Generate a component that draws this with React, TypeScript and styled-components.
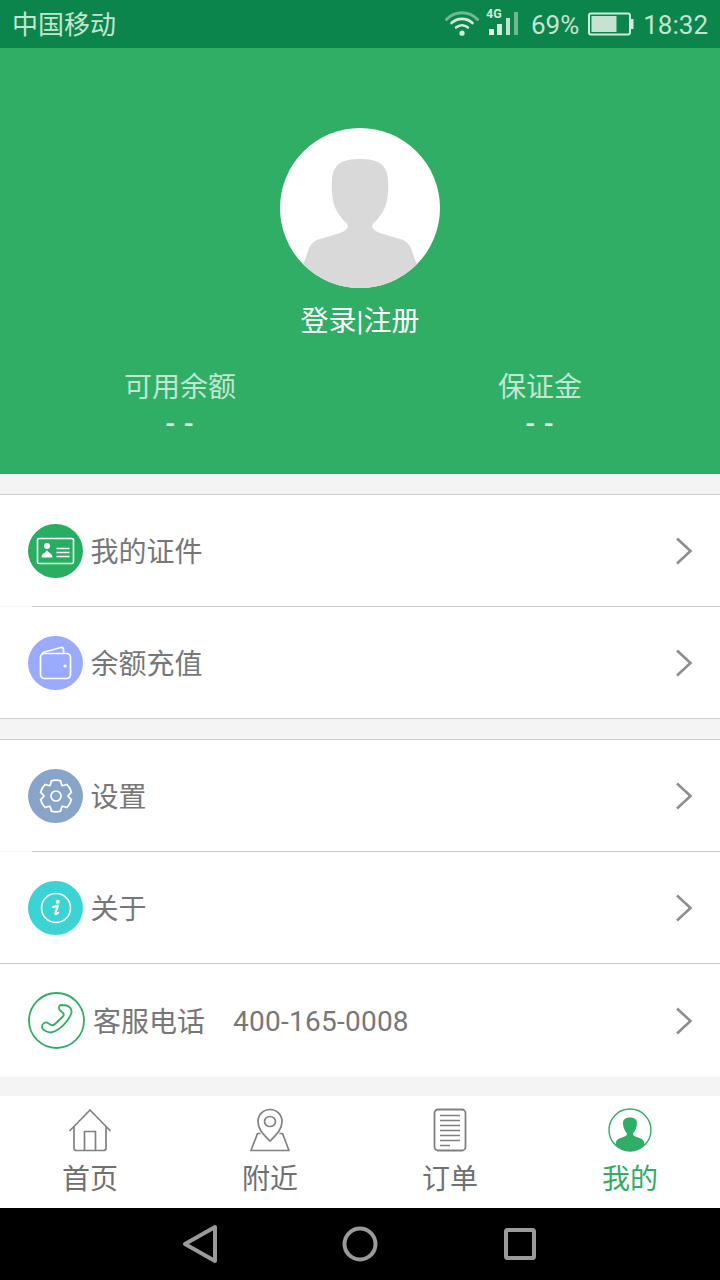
import styled, { createGlobalStyle } from "styled-components";

const FONT = `Roboto, "Noto Sans CJK SC", sans-serif`;

const GlobalStyle = createGlobalStyle`
  html, body {
    margin: 0;
    padding: 0;
    background: #f4f4f4;
  }
  * {
    box-sizing: border-box;
  }
`;

const Page = styled.div`
  width: 720px;
  height: 1280px;
  display: flex;
  flex-direction: column;
  overflow: hidden;
  background: #f4f4f4;
  font-family: ${FONT};
`;

const StatusBar = styled.div`
  height: 48px;
  padding: 0 12px;
  display: flex;
  align-items: center;
  background: #0b854b;
  color: #c4e3d1;
  font-size: 26px;
`;

const Carrier = styled.span`
  flex: 1;
  margin-bottom: 4px;
`;

const StatusIcons = styled.div`
  display: flex;
  align-items: center;
`;

const BatteryText = styled.span`
  margin: 2px 9px 0 13px;
`;

const Clock = styled.span`
  margin: 2px 0 0 9px;
`;

const Header = styled.div`
  height: 426px;
  padding-top: 80px;
  display: flex;
  flex-direction: column;
  align-items: center;
  background: #30ae66;
`;

const Avatar = styled.div`
  width: 160px;
  height: 160px;
  border-radius: 50%;
  overflow: hidden;
  background: #fff;
`;

const LoginText = styled.div`
  margin-top: 17px;
  color: #fff;
  font-size: 28px;
  line-height: 34px;
`;

const Balances = styled.div`
  width: 100%;
  margin-top: 32px;
  display: grid;
  grid-template-columns: 1fr 1fr;
`;

const Balance = styled.div`
  display: flex;
  flex-direction: column;
  align-items: center;
  color: #c1e6d1;
  font-size: 28px;
  line-height: 34px;
`;

const BalanceValue = styled.span`
  margin-top: 4px;
  color: #e0f2e8;
  font-weight: 500;
  line-height: 30px;
  letter-spacing: 1px;
`;

const Group = styled.div<{ $gap: number }>`
  margin-top: ${({ $gap }) => $gap}px;
  border-top: 1px solid #cccccc;
  background: #fff;
`;

const Row = styled.div<{ $height: number; $textGap: number }>`
  height: ${({ $height }) => $height}px;
  padding: 0 27px 0 28px;
  display: flex;
  align-items: center;
  gap: ${({ $textGap }) => $textGap}px;
  color: #777;
  font-size: 28px;
`;

const IconCircle = styled.div<{ $color: string }>`
  width: 55px;
  height: 54.5px;
  margin-top: 1px;
  flex: none;
  border-radius: 50%;
  display: flex;
  align-items: center;
  justify-content: center;
  background: ${({ $color }) => $color};
`;

const RowLabel = styled.div`
  flex: 1;
  margin-bottom: 2px;
  display: flex;
  align-items: center;
  gap: 28px;
`;

const PhoneNumber = styled.span`
  margin-top: 3px;
  letter-spacing: 0.25px;
`;

const Divider = styled.div<{ $inset?: boolean }>`
  height: 1px;
  background: ${({ $inset }) =>
    $inset ? "linear-gradient(to right, #f6f6f6 32px, #cccccc 32px)" : "#cccccc"};
`;

const TabBar = styled.div`
  height: 112px;
  margin-top: 19px;
  display: grid;
  grid-template-columns: repeat(4, 1fr);
  background: #fff;
`;

const Tab = styled.div<{ $active?: boolean }>`
  padding-top: 12px;
  display: flex;
  flex-direction: column;
  align-items: center;
  color: ${({ $active }) => ($active ? "#30ae66" : "#707070")};
  font-size: 28px;
  line-height: 34px;
`;

const TabIcon = styled.div`
  height: 44px;
  margin-bottom: 11px;
`;

const NavBar = styled.div`
  height: 72px;
  display: grid;
  grid-template-columns: repeat(3, 160px);
  justify-content: center;
  justify-items: center;
  align-items: center;
  background: #000;
`;

const Chevron = () => (
  <svg width="18" height="28" viewBox="0 0 18 28" fill="none">
    <path d="M2 1.5 L15.5 14 L2 26.5" stroke="#8e8e8e" strokeWidth="2.6" />
  </svg>
);

const WifiIcon = () => (
  <svg width="34" height="26" viewBox="0 0 34 26" fill="none" strokeLinecap="round">
    <path d="M1.5 8.5 C10 -0.5 24 -0.5 32.5 8.5" stroke="#6fb892" strokeWidth="3" />
    <path d="M6.5 12 C12.5 6.5 21.5 6.5 27.5 12" stroke="#d3ecdd" strokeWidth="2.6" />
    <path d="M11 16.5 C14.5 13.5 19.5 13.5 23 16.5" stroke="#d3ecdd" strokeWidth="2.6" />
    <circle cx="17" cy="22.2" r="2.6" fill="#d3ecdd" />
  </svg>
);

const SignalIcon = () => (
  <svg width="32" height="40" viewBox="0 -4 32 40" style={{ marginLeft: 6.5 }}>
    <text x="0" y="9.5" fontFamily="Roboto, sans-serif" fontWeight="700" fontSize="12.5" fill="#d3ecdd">
      4G
    </text>
    <rect x="3" y="21" width="5" height="6" rx="0.5" fill="#e6f4ec" />
    <rect x="11" y="16" width="5" height="11" fill="#d3ecdd" />
    <rect x="20" y="10" width="4" height="17" fill="#c0e2ce" />
    <rect x="28" y="4" width="4" height="23" fill="#6fb892" />
  </svg>
);

const BatteryIcon = () => (
  <svg width="46" height="24" viewBox="0 0 46 24">
    <rect x="1" y="1.5" width="41" height="21" rx="2" fill="none" stroke="#d3ecdd" strokeWidth="2" />
    <rect x="3.5" y="4" width="25" height="16" fill="#c4e3d1" />
    <rect x="43" y="7" width="2.5" height="10" fill="#d3ecdd" />
  </svg>
);

const AvatarFigure = () => (
  <svg width="160" height="160" viewBox="0 0 160 160">
    <path
      d="M80 31 C62 31 53 36 52 52 C51 66 53 78 58 85 C61 90 65 94 68 97 C68 101 65 103 60 105 L40 111 C33 113 30 117 28 123 L23 137 L23 160 L137 160 L137 137 L132 123 C130 117 127 113 120 111 L100 105 C95 103 92 101 92 97 C95 94 99 90 102 85 C107 78 109 66 108 52 C107 36 98 31 80 31 Z"
      fill="#d9d9d9"
    />
  </svg>
);

const CardIcon = () => (
  <svg width="40" height="30" viewBox="0 0 40 30" fill="none" stroke="#fff">
    <rect x="1.5" y="2.5" width="36" height="25" rx="1.5" strokeWidth="1.6" />
    <circle cx="11" cy="10" r="3" fill="#fff" stroke="none" />
    <path d="M5.5 21.5 C5.5 17 9.5 17.5 11 14 C12.5 17.5 16.5 17 16.5 21.5 Z" fill="#fff" stroke="none" />
    <path d="M20.5 12.5 H33.5 M20.5 16.5 H33.5 M20.5 20.5 H33.5" strokeWidth="1.7" />
  </svg>
);

const WalletIcon = () => (
  <svg width="34" height="34" viewBox="0 0 34 34" fill="none" stroke="#fff" strokeWidth="1.7">
    <rect x="1.5" y="7.5" width="30" height="25" rx="4" />
    <path d="M3 9 C3 7 4 6.5 5.5 6 L22 1.5 C23.5 1.2 24.5 2 24.5 3.5 L24.5 7" />
    <circle cx="26" cy="20" r="1.6" fill="#fff" stroke="none" />
  </svg>
);

// six rounded teeth, one pointing straight up
const gearPath = () => {
  const at = (deg: number, r: number) => {
    const rad = (deg * Math.PI) / 180;
    return `${(17 + r * Math.cos(rad)).toFixed(2)} ${(17 + r * Math.sin(rad)).toFixed(2)}`;
  };
  let d = `M${at(-120, 12)}`;
  for (let i = 0; i < 6; i++) {
    const a = i * 60 - 90;
    d += ` Q${at(a - 24, 13)} ${at(a - 17, 15.8)} Q${at(a, 16.6)} ${at(a + 17, 15.8)} Q${at(a + 24, 13)} ${at(a + 30, 12)}`;
  }
  return d + " Z";
};

const GearIcon = () => (
  <svg width="34" height="34" viewBox="0 0 34 34" fill="none" stroke="#fff" strokeWidth="1.7" strokeLinejoin="round">
    <path d={gearPath()} />
    <circle cx="17" cy="17" r="5" />
  </svg>
);

const InfoIcon = () => (
  <svg width="32" height="32" viewBox="0 0 32 32" fill="none">
    <circle cx="16" cy="16" r="14.5" stroke="#fff" strokeWidth="1.6" />
    <circle cx="17.8" cy="9.8" r="2" fill="#fff" />
    <path d="M13 15 L17.8 13.6 L15.4 21.4 C15.2 22.4 16 22.6 18 21" stroke="#fff" strokeWidth="2.2" strokeLinejoin="round" strokeLinecap="round" />
  </svg>
);

const PhoneIcon = () => (
  <svg width="57" height="57" viewBox="0 0 57 57" fill="none" stroke="#30ae66" strokeWidth="1.8" style={{ flex: "none" }}>
    <circle cx="28.5" cy="28.5" r="27.5" />
    <path d="M33 13 L38.5 13.5 C41.5 14 44 17 43.5 20.5 C41.5 28 32 38.5 23 40.5 C19 40.5 14 38 14 34.5 C14 32 17 30 19 30.5 L23 33 C24.5 33.5 26 33 27 32 L34.5 25 C36 23.5 36 22 35 21 L32 18.5 C30.5 16 30.5 13.5 33 13 Z" />
  </svg>
);

const HomeIcon = () => (
  <svg width="44" height="44" viewBox="0 0 44 44" fill="none" stroke="#808080" strokeWidth="1.7" strokeLinejoin="round">
    <path d="M2 22.5 L22 2 L42 22.5" strokeLinecap="round" />
    <path d="M6 19 V40 C6 41.5 7 42.5 8.5 42.5 H35.5 C37 42.5 38 41.5 38 40 V19" />
    <path d="M16.5 42.5 V23.5 H27.5 V42.5" />
  </svg>
);

const MapPinIcon = () => (
  <svg width="40" height="44" viewBox="0 0 40 44" fill="none" stroke="#808080" strokeWidth="1.7" strokeLinejoin="round">
    <path d="M20 33 C14 27 8 22 8 13.5 C8 6.5 13.5 1.5 20 1.5 C26.5 1.5 32 6.5 32 13.5 C32 22 26 27 20 33 Z" />
    <ellipse cx="20" cy="13.5" rx="5.5" ry="5" />
    <path d="M10.5 25.5 H7.5 L1 42.5 H39 L32.5 25.5 H29.5" />
  </svg>
);

const OrderIcon = () => (
  <svg width="34" height="44" viewBox="0 0 34 44" fill="none" stroke="#808080">
    <rect x="1.5" y="1.5" width="31" height="41" rx="3.5" strokeWidth="1.8" />
    <path d="M7 7.5 H27 M7 12.5 H27 M7 17.5 H27 M7 22.5 H27 M7 27.5 H27 M7 32.5 H27 M7 37.5 H17" strokeWidth="1.7" />
  </svg>
);

const ProfileIcon = () => (
  <svg width="44" height="44" viewBox="0 0 44 44">
    <defs>
      <clipPath id="profile-clip">
        <circle cx="22" cy="22" r="21" />
      </clipPath>
    </defs>
    <circle cx="22" cy="22" r="21" fill="#fff" stroke="#30ae66" strokeWidth="1.4" />
    <path
      clipPath="url(#profile-clip)"
      d="M15 15 C15 11 18 9.5 22 9.5 C26 9.5 29 11 29 15 C29 20 26.5 24 25 25.5 C25 28 27 28.5 30 29.5 C34 30.5 36 32 36.5 36 V44 H7.5 V36 C8 32 10 30.5 14 29.5 C17 28.5 19 28 19 25.5 C17.5 24 15 20 15 15 Z"
      fill="#30ae66"
    />
  </svg>
);

const BackIcon = () => (
  <svg width="36" height="40" viewBox="0 0 36 40" fill="none" stroke="#9a9a9a" strokeWidth="4" strokeLinejoin="round">
    <path d="M33 3 V37 L3 20 Z" />
  </svg>
);

const HomeNavIcon = () => (
  <svg width="36" height="36" viewBox="0 0 36 36" fill="none" stroke="#9a9a9a" strokeWidth="4">
    <circle cx="18" cy="18" r="15.5" />
  </svg>
);

const RecentIcon = () => (
  <svg width="32" height="32" viewBox="0 0 32 32" fill="none" stroke="#9a9a9a" strokeWidth="4" strokeLinejoin="round">
    <rect x="2" y="2" width="28" height="28" rx="1.5" />
  </svg>
);

const tabs = [
  { label: "首页", icon: <HomeIcon /> },
  { label: "附近", icon: <MapPinIcon /> },
  { label: "订单", icon: <OrderIcon /> },
  { label: "我的", icon: <ProfileIcon />, active: true },
];

const App = () => (
  <>
    <GlobalStyle />
    <Page>
      <StatusBar>
        <Carrier>中国移动</Carrier>
        <StatusIcons>
          <WifiIcon />
          <SignalIcon />
          <BatteryText>69%</BatteryText>
          <BatteryIcon />
          <Clock>18:32</Clock>
        </StatusIcons>
      </StatusBar>

      <Header>
        <Avatar>
          <AvatarFigure />
        </Avatar>
        <LoginText>登录|注册</LoginText>
        <Balances>
          <Balance>
            可用余额
            <BalanceValue>- -</BalanceValue>
          </Balance>
          <Balance>
            保证金
            <BalanceValue>- -</BalanceValue>
          </Balance>
        </Balances>
      </Header>

      <Group $gap={20}>
        <Row $height={111} $textGap={7.5}>
          <IconCircle $color="#27ae60">
            <CardIcon />
          </IconCircle>
          <RowLabel>我的证件</RowLabel>
          <Chevron />
        </Row>
        <Divider $inset />
        <Row $height={111} $textGap={7.5}>
          <IconCircle $color="#9aaafc">
            <WalletIcon />
          </IconCircle>
          <RowLabel>余额充值</RowLabel>
          <Chevron />
        </Row>
        <Divider />
      </Group>

      <Group $gap={20}>
        <Row $height={111} $textGap={7.5}>
          <IconCircle $color="#88a4c8">
            <GearIcon />
          </IconCircle>
          <RowLabel>设置</RowLabel>
          <Chevron />
        </Row>
        <Divider $inset />
        <Row $height={111} $textGap={7.5}>
          <IconCircle $color="#3bd3d3">
            <InfoIcon />
          </IconCircle>
          <RowLabel>关于</RowLabel>
          <Chevron />
        </Row>
        <Divider />
        <Row $height={113} $textGap={8}>
          <PhoneIcon />
          <RowLabel>
            <span>客服电话</span>
            <PhoneNumber>400-165-0008</PhoneNumber>
          </RowLabel>
          <Chevron />
        </Row>
      </Group>

      <TabBar>
        {tabs.map((tab) => (
          <Tab key={tab.label} $active={tab.active}>
            <TabIcon>{tab.icon}</TabIcon>
            {tab.label}
          </Tab>
        ))}
      </TabBar>

      <NavBar>
        <BackIcon />
        <HomeNavIcon />
        <RecentIcon />
      </NavBar>
    </Page>
  </>
);

export default App;
